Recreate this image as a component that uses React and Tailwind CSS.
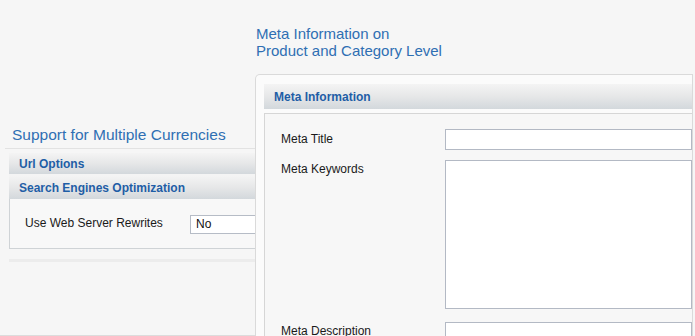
import React from "react";

function Bar({ children, className = "" }) {
  return (
    <div
      className={`flex items-center bg-gradient-to-b from-[#f4f4f4] via-[#e6e7e8] to-[#d3d8dc] text-[12px] font-bold text-[#1f5ea6] ${className}`}
    >
      {children}
    </div>
  );
}

export default function App() {
  return (
    <div className="w-[695px] h-[336px] overflow-hidden bg-[#f6f6f6] flex font-['Liberation_Sans',Arial,sans-serif]">
      {/* Left column */}
      <div className="w-[255px] shrink-0 pt-[126px] flex flex-col">
        <div className="pl-[12px] text-[15.5px] leading-[18px] text-[#2f6fb3]">
          Support for Multiple Currencies
        </div>
        <div className="ml-[5px] mt-[4px] border-t border-[#e2e2e2]" />
        <div className="ml-[9px] mt-[4px] flex flex-col">
          <Bar className="h-[21px] pl-[10px]">Url Options</Bar>
          <div className="h-[2px] bg-[#f4f4f4]" />
          <Bar className="h-[23px] pl-[10px]">Search Engines Optimization</Bar>
          <div className="h-[50px] bg-[#f8f8f8] border border-t-0 border-r-0 border-[#cfd3d6] flex items-center">
            <div className="w-[180px] pl-[15px] -mt-[1px] text-[12px] text-[#1a1a1a]">
              Use Web Server Rewrites
            </div>
            <div className="flex-1 h-[19px] mt-[1px] bg-white border border-[#b6bcc6] border-r-0 flex items-center pl-[5px] text-[12px] text-[#111]">
              No
            </div>
          </div>
          <div className="mt-[10px] h-[3px] bg-[#ececec]" />
          <div className="h-[73px]" />
          <div className="-ml-[9px] border-t border-[#dcdcdc]" />
        </div>
      </div>

      {/* Right column */}
      <div className="flex-1 flex flex-col pt-[25px]">
        <div className="pl-[1px] text-[15px] leading-[17px] text-[#2f6fb3]">
          <div>Meta Information on</div>
          <div>Product and Category Level</div>
        </div>
        <div className="mt-[15px] mr-[2px] flex-1 bg-[#fbfbfb] border-l border-t border-r border-[#dadada] rounded-tl-[5px] pt-[9px] pl-[8px] flex flex-col">
          <Bar className="h-[25px] pl-[10px]">Meta Information</Bar>
          <div className="mt-[4px] flex-1 bg-[#f7f7f7] border-l border-t border-[#d6d6d6] pt-[15px] flex flex-col">
            <div className="flex h-[21px]">
              <div className="w-[180px] pl-[16px] pt-[1px] text-[12px] text-[#1a1a1a]">Meta Title</div>
              <div className="flex-1 bg-white border border-[#b3b9c4]" />
            </div>
            <div className="flex h-[149px] mt-[10px]">
              <div className="w-[180px] pl-[16px] text-[12px] text-[#1a1a1a]">Meta Keywords</div>
              <div className="flex-1 bg-white border border-[#b3b9c4]" />
            </div>
            <div className="flex h-[21px] mt-[13px]">
              <div className="w-[180px] pl-[16px] text-[12px] text-[#1a1a1a]">Meta Description</div>
              <div className="flex-1 bg-white border border-[#b3b9c4]" />
            </div>
          </div>
        </div>
      </div>
    </div>
  );
}
